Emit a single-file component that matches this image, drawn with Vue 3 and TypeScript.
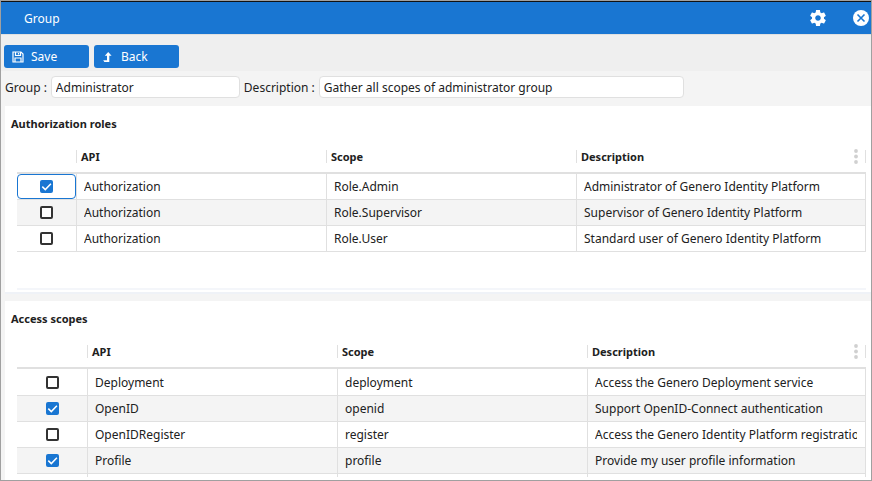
<script setup lang="ts">
import { reactive, ref } from 'vue'

interface Row {
  checked: boolean
  api: string
  scope: string
  description: string
}

interface Section {
  id: string
  title: string
  rows: Row[]
}

const group = ref('Administrator')
const description = ref('Gather all scopes of administrator group')

const sections = reactive<Section[]>([
  {
    id: 'roles',
    title: 'Authorization roles',
    rows: [
      { checked: true, api: 'Authorization', scope: 'Role.Admin', description: 'Administrator of Genero Identity Platform' },
      { checked: false, api: 'Authorization', scope: 'Role.Supervisor', description: 'Supervisor of Genero Identity Platform' },
      { checked: false, api: 'Authorization', scope: 'Role.User', description: 'Standard user of Genero Identity Platform' },
    ],
  },
  {
    id: 'scopes',
    title: 'Access scopes',
    rows: [
      { checked: false, api: 'Deployment', scope: 'deployment', description: 'Access the Genero Deployment service' },
      { checked: true, api: 'OpenID', scope: 'openid', description: 'Support OpenID-Connect authentication' },
      { checked: false, api: 'OpenIDRegister', scope: 'register', description: 'Access the Genero Identity Platform registration' },
      { checked: true, api: 'Profile', scope: 'profile', description: 'Provide my user profile information' },
    ],
  },
])

const current = ref('roles-0')
</script>

<template>
  <div class="window">
    <header class="titlebar">
      <h1>Group</h1>
      <button type="button" class="icon-button" aria-label="Settings">
        <svg viewBox="2 2 20 20" width="16" height="16">
          <path fill="currentColor" d="M19.43 12.98c.04-.32.07-.64.07-.98s-.03-.66-.07-.98l2.11-1.65c.19-.15.24-.42.12-.64l-2-3.46c-.12-.22-.39-.3-.61-.22l-2.49 1c-.52-.4-1.08-.73-1.69-.98l-.38-2.65C14.46 2.18 14.25 2 14 2h-4c-.25 0-.46.18-.49.42l-.38 2.65c-.61.25-1.17.59-1.69.98l-2.49-1c-.23-.09-.49 0-.61.22l-2 3.46c-.13.22-.07.49.12.64l2.11 1.65c-.04.32-.07.65-.07.98s.03.66.07.98l-2.11 1.65c-.19.15-.24.42-.12.64l2 3.46c.12.22.39.3.61.22l2.49-1c.52.4 1.08.73 1.69.98l.38 2.65c.03.24.24.42.49.42h4c.25 0 .46-.18.49-.42l.38-2.65c.61-.25 1.17-.59 1.69-.98l2.49 1c.23.09.49 0 .61-.22l2-3.46c.12-.22.07-.49-.12-.64l-2.11-1.65zM12 15.5c-1.93 0-3.5-1.57-3.5-3.5s1.57-3.5 3.5-3.5 3.5 1.57 3.5 3.5-1.57 3.5-3.5 3.5z" />
        </svg>
      </button>
      <button type="button" class="icon-button" aria-label="Close">
        <svg viewBox="0 0 16 16" width="16" height="16">
          <circle cx="8" cy="8" r="8" fill="currentColor" />
          <path d="M4.5 4.5l7 7M11.5 4.5l-7 7" stroke="#1976d2" stroke-width="1.6" />
        </svg>
      </button>
    </header>

    <div class="toolbar">
      <button type="button" class="action">
        <svg viewBox="0 0 12 12" width="12" height="12" fill="none" stroke="currentColor" stroke-width="1.2">
          <path d="M1 1h8l2 2v8H1z" />
          <path d="M3.5 1v3.5h5V1M3 11V7h6v4M6.5 2v1.5" />
        </svg>
        Save
      </button>
      <button type="button" class="action">
        <svg viewBox="0 0 12 12" width="12" height="12">
          <path fill="currentColor" d="M6.2 1L9.6 4.8H7.3V11H2.4L1.2 9.2H5V4.8H2.8z" />
        </svg>
        Back
      </button>
    </div>

    <form class="fields" @submit.prevent>
      <label for="group">Group :</label>
      <input id="group" v-model="group" class="group-input" type="text" />
      <label for="description">Description :</label>
      <input id="description" v-model="description" class="description-input" type="text" />
    </form>

    <section v-for="section in sections" :key="section.id" class="panel" :class="section.id">
      <h2>{{ section.title }}</h2>
      <div class="table-area">
        <table>
          <colgroup>
            <col class="col-check" />
            <col class="col-text" />
            <col class="col-text" />
            <col />
          </colgroup>
          <thead>
            <tr>
              <th aria-label="Selected"><div class="head"></div></th>
              <th><div class="head">API</div></th>
              <th><div class="head">Scope</div></th>
              <th>
                <div class="head">
                  Description
                  <button type="button" class="menu" aria-label="Table options">
                    <svg viewBox="0 0 4 15" width="4" height="15" fill="currentColor">
                      <circle cx="2" cy="2" r="1.9" />
                      <circle cx="2" cy="7.5" r="1.9" />
                      <circle cx="2" cy="13" r="1.9" />
                    </svg>
                  </button>
                </div>
              </th>
            </tr>
          </thead>
          <tbody>
            <tr v-for="(row, i) in section.rows" :key="i" @click="current = `${section.id}-${i}`">
              <td class="check-cell">
                <label class="check" :class="{ current: current === `${section.id}-${i}` }">
                  <input v-model="row.checked" type="checkbox" :aria-label="row.scope" />
                  <svg v-if="row.checked" viewBox="0 0 13 13" width="13" height="13">
                    <path d="M2.3 6.6l3 3 5.6-5.8" fill="none" stroke="#fff" stroke-width="1.5" />
                  </svg>
                </label>
              </td>
              <td><div class="value">{{ row.api }}</div></td>
              <td><div class="value">{{ row.scope }}</div></td>
              <td><div class="value">{{ row.description }}</div></td>
            </tr>
            <tr v-if="section.id === 'scopes'">
              <td></td>
              <td></td>
              <td></td>
              <td></td>
            </tr>
          </tbody>
        </table>
      </div>
    </section>
  </div>
</template>

<style>
body {
  margin: 0;
}
</style>

<style scoped>
* {
  box-sizing: border-box;
}

.window {
  display: flex;
  flex-direction: column;
  height: 100vh;
  border: 1px solid #a0a0a0;
  background: #f4f4f4;
  color: #212121;
  font: 12px/17px "Noto Sans", sans-serif;
  overflow: hidden;
}

button,
input {
  font: inherit;
  color: inherit;
}

.titlebar {
  display: flex;
  flex: none;
  align-items: center;
  gap: 27px;
  height: 33px;
  padding: 0 2px 0 23px;
  border-top: 1px solid #111;
  background: #1976d2;
  color: #fff;
}

h1 {
  flex: 1;
  margin: 0;
  font-size: 12px;
  font-weight: 400;
}

.icon-button,
.menu {
  display: flex;
  padding: 0;
  border: 0;
  background: none;
}

.toolbar {
  display: flex;
  flex: none;
  gap: 5px;
  padding: 10px 3px 3px;
  border-top: 1px solid #e0e0e0;
  background: #efefef;
}

.action {
  display: flex;
  align-items: center;
  gap: 7px;
  width: 85px;
  height: 23px;
  padding: 0 8px;
  border: 0;
  border-radius: 3px;
  background: #1976d2;
  color: #fff;
}

.fields {
  display: flex;
  flex: none;
  align-items: center;
  gap: 4px;
  padding: 5px 4px 8px;
}

.fields label {
  white-space: nowrap;
}

.fields input {
  height: 22px;
  padding: 0 4px;
  border: 1px solid #e0e0e0;
  border-radius: 4px;
  background: #fff;
}

.group-input {
  width: 189px;
}

.description-input {
  width: 365px;
}

.panel {
  flex: none;
  margin-left: 4px;
  padding: 8px 5px 0 12px;
  background: #fff;
}

.roles {
  height: 188px;
  margin-bottom: 7px;
  border-bottom: 2px solid #eff2f7;
}

.scopes {
  display: flex;
  flex: 1;
  flex-direction: column;
  min-height: 0;
  padding-bottom: 3px;
}

h2 {
  margin: 0 0 0 -6px;
  font-size: 11px;
  line-height: 20px;
  font-weight: 700;
}

.table-area {
  min-height: 0;
  overflow: hidden;
}

.roles .table-area {
  height: 156px;
  border-bottom: 2px solid #f4f6fa;
}

table {
  width: 100%;
  table-layout: fixed;
  border-spacing: 0;
}

.col-check {
  width: 60px;
}

.scopes .col-check {
  width: 71px;
}

.col-text {
  width: 250px;
}

th {
  height: 40px;
  padding: 6px 0 0;
  border-bottom: 2px solid #e0e0e0;
  text-align: left;
  font-size: 11px;
}

.head {
  display: flex;
  align-items: center;
  justify-content: space-between;
  height: 13px;
  padding: 0 7px 0 4px;
  border-right: 1px solid #e0e0e0;
}

.menu {
  color: #d0d0d0;
}

td {
  height: 26px;
  padding: 0;
  border-right: 1px solid #e0e0e0;
  border-bottom: 1px solid #e0e0e0;
}

.scopes tbody tr:first-child td {
  height: 27px;
}

tbody tr:nth-child(even) {
  background: #f4f4f4;
}

.value {
  margin: 0 8px 0 7px;
  overflow: hidden;
  white-space: nowrap;
}

.check {
  display: grid;
  place-items: center;
  height: 25px;
  border: 1px solid transparent;
  border-radius: 4px;
}

.check.current {
  border-color: #1976d2;
}

.check > * {
  grid-area: 1 / 1;
}

.check svg {
  pointer-events: none;
}

.check input {
  width: 13px;
  height: 13px;
  margin: 0;
  border: 2px solid #333;
  border-radius: 2px;
  background: #fff;
  appearance: none;
}

.check input:checked {
  border-color: #1976d2;
  background: #1976d2;
}
</style>
